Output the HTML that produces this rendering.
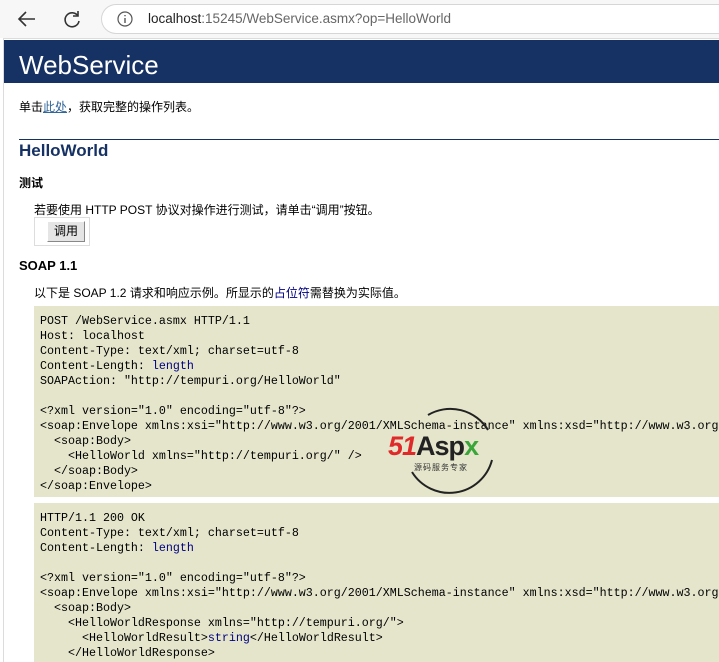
<!DOCTYPE html>
<html><head><meta charset="utf-8">
<style>
*{margin:0;padding:0;box-sizing:border-box}
body{width:719px;height:662px;overflow:hidden;background:#fff;font-family:"Liberation Sans","Noto Sans CJK SC",sans-serif;position:relative}
.bar{position:absolute;left:0;top:0;width:719px;height:38px;background:#f7f7f7}
.url{position:absolute;left:101px;top:4px;width:618px;height:30px;border:1px solid #d6d6d6;border-right:none;border-radius:15px 0 0 15px;background:#fff}
.page{position:absolute;left:3px;top:38px;width:716px;height:624px;border-left:1px solid #dcdcdc;border-top:1px solid #dcdcdc}
.hdr{position:absolute;left:4px;top:40px;width:715px;height:43px;background:#163264;color:#fff;font-size:26px;padding:10px 0 0 15px}
.t{position:absolute;font-size:12px;color:#000;white-space:nowrap}
pre{position:absolute;left:34px;width:685px;overflow:hidden;background:#e5e5cc;font-family:"Liberation Mono",monospace;font-size:11.67px;line-height:15px;padding:8px 0 0 6px;color:#000}
.b{color:#000080}
</style></head><body>
<div class="bar"></div>
<svg style="position:absolute;left:16px;top:9px" width="22" height="20"><path d="M19 10H3M10 3L3 10l7 7" stroke="#333" stroke-width="1.6" fill="none"/></svg>
<svg style="position:absolute;left:61px;top:8px" width="22" height="22"><path d="M17 8A7 7 0 1 0 18 13" stroke="#333" stroke-width="1.6" fill="none"/><path d="M17 3v5h-5" stroke="#333" stroke-width="1.6" fill="none"/></svg>
<div class="url"></div>
<svg style="position:absolute;left:116px;top:10px" width="18" height="18"><circle cx="9" cy="9" r="7" stroke="#555" stroke-width="1.2" fill="none"/><path d="M9 8v5M9 5v1.3" stroke="#555" stroke-width="1.4"/></svg>
<div class="t" style="left:148px;top:11px;font-size:13.5px;color:#222">localhost<span style="color:#666">:15245/WebService.asmx?op=HelloWorld</span></div>
<div class="page"></div>
<div class="hdr">WebService</div>
<div class="t" style="left:19px;top:98px">单击<span style="color:#336699;text-decoration:underline">此处</span>，获取完整的操作列表。</div>
<div style="position:absolute;left:19px;top:139px;width:700px;border-top:1px solid #163264"></div>
<div class="t" style="left:19px;top:141px;font-size:17px;font-weight:bold;color:#163264">HelloWorld</div>
<div class="t" style="left:19px;top:174px;font-weight:bold">测试</div>
<div class="t" style="left:34px;top:201px">若要使用 HTTP POST 协议对操作进行测试，请单击“调用”按钮。</div>
<div style="position:absolute;left:34px;top:217px;width:56px;height:29px;border:1px solid #ddd"></div>
<div class="t" style="left:47px;top:221px;width:38px;height:21px;background:#e5e5e5;border:1px solid #888;border-top-color:#fff;border-left-color:#fff;text-align:center;line-height:19px">调用</div>
<div class="t" style="left:19px;top:258px;font-weight:bold;font-size:13px">SOAP 1.1</div>
<div class="t" style="left:34px;top:284px">以下是 SOAP 1.2 请求和响应示例。所显示的<span style="color:#000080">占位符</span>需替换为实际值。</div>
<pre style="top:306px;height:191px">POST /WebService.asmx HTTP/1.1
Host: localhost
Content-Type: text/xml; charset=utf-8
Content-Length: <span class="b">length</span>
SOAPAction: "http://tempuri.org/HelloWorld"

&lt;?xml version="1.0" encoding="utf-8"?&gt;
&lt;soap:Envelope xmlns:xsi="http://www.w3.org/2001/XMLSchema-instance" xmlns:xsd="http://www.w3.org/2001/XMLSchema"
  &lt;soap:Body&gt;
    &lt;HelloWorld xmlns="http://tempuri.org/" /&gt;
  &lt;/soap:Body&gt;
&lt;/soap:Envelope&gt;</pre>
<pre style="top:503px;height:159px">HTTP/1.1 200 OK
Content-Type: text/xml; charset=utf-8
Content-Length: <span class="b">length</span>

&lt;?xml version="1.0" encoding="utf-8"?&gt;
&lt;soap:Envelope xmlns:xsi="http://www.w3.org/2001/XMLSchema-instance" xmlns:xsd="http://www.w3.org/2001/XMLSchema"
  &lt;soap:Body&gt;
    &lt;HelloWorldResponse xmlns="http://tempuri.org/"&gt;
      &lt;HelloWorldResult&gt;<span class="b">string</span>&lt;/HelloWorldResult&gt;
    &lt;/HelloWorldResponse&gt;</pre>
<svg style="position:absolute;left:400px;top:400px" width="100" height="96"><path d="M28 15A44 44 0 0 1 88 30M92 60A44 44 0 0 1 12 72" stroke="#222" stroke-width="2" fill="none"/></svg>
<div class="t" style="left:388px;top:431px;font-size:27px;font-weight:bold;font-style:italic;color:#e02a2a;letter-spacing:-1px">51<span style="color:#222;font-style:normal">Asp</span><span style="color:#3aa63a;font-style:normal">x</span></div>
<div class="t" style="left:414px;top:462px;font-size:8px;color:#333;letter-spacing:1px">源码服务专家</div>
</body></html>
